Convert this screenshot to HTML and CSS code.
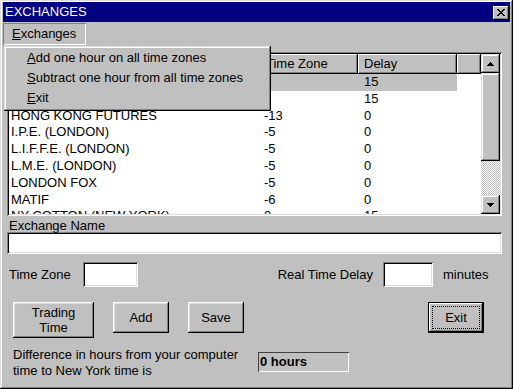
FILE: index.html
```html
<!DOCTYPE html>
<html lang="en">
<head>
    <meta charset="UTF-8">
    <title>EXCHANGES</title>
    <link rel="stylesheet" href="styles.css">
</head>
<body>
<div class="window">
    <div class="titlebar">
        <span class="title">EXCHANGES</span>
        <button class="close" type="button">
            <svg width="8" height="7" viewBox="0 0 8 7"><path d="M0 0h2v1h-2z M1 1h2v1h-2z M2 2h4v1h-4z M3 3h2v1h-2z M2 4h4v1h-4z M1 5h2v1h-2z M0 6h2v1h-2z M6 0h2v1h-2z M5 1h2v1h-2z M5 5h2v1h-2z M6 6h2v1h-2z" fill="#000"/></svg>
        </button>
    </div>
    <div class="menubar">
        <span class="menu-open"><u>E</u>xchanges</span>
    </div>

    <div class="content">
        <div class="list">
            <div class="list-main">
                <div class="list-head">
                    <div class="col name">Exchange</div>
                    <div class="col tz">Time Zone</div>
                    <div class="col delay">Delay</div>
                    <div class="col filler"></div>
                </div>
                <div class="row selected"><div class="col name">COMEX (NEW YORK)</div><div class="col tz">0</div><div class="col delay">15</div></div>
                <div class="row"><div class="col name">CSCE (NEW YORK)</div><div class="col tz">0</div><div class="col delay">15</div></div>
                <div class="row"><div class="col name">HONG KONG FUTURES</div><div class="col tz">-13</div><div class="col delay">0</div></div>
                <div class="row"><div class="col name">I.P.E. (LONDON)</div><div class="col tz">-5</div><div class="col delay">0</div></div>
                <div class="row"><div class="col name">L.I.F.F.E. (LONDON)</div><div class="col tz">-5</div><div class="col delay">0</div></div>
                <div class="row"><div class="col name">L.M.E. (LONDON)</div><div class="col tz">-5</div><div class="col delay">0</div></div>
                <div class="row"><div class="col name">LONDON FOX</div><div class="col tz">-5</div><div class="col delay">0</div></div>
                <div class="row"><div class="col name">MATIF</div><div class="col tz">-6</div><div class="col delay">0</div></div>
                <div class="row"><div class="col name">NY COTTON (NEW YORK)</div><div class="col tz">0</div><div class="col delay">15</div></div>
            </div>
            <div class="scrollbar">
                <div class="sb-btn">
                    <svg width="7" height="4" viewBox="0 0 7 4"><path d="M3 0h1v1h-1z M2 1h3v1h-3z M1 2h5v1h-5z M0 3h7v1h-7z" fill="#000"/></svg>
                </div>
                <div class="sb-thumb"></div>
                <div class="sb-track"></div>
                <div class="sb-btn">
                    <svg width="7" height="4" viewBox="0 0 7 4"><path d="M0 0h7v1h-7z M1 1h5v1h-5z M2 2h3v1h-3z M3 3h1v1h-1z" fill="#000"/></svg>
                </div>
            </div>
        </div>

        <div class="field-label">Exchange Name</div>
        <input class="name-input" type="text">

        <div class="tz-row">
            <span class="tz-label">Time Zone</span>
            <input class="tz-input" type="text">
            <div class="delay-group">
                <span class="delay-label">Real Time Delay</span>
                <input class="delay-input" type="text">
                <span class="minutes">minutes</span>
            </div>
        </div>

        <div class="buttons">
            <button class="btn btn-trading" type="button">Trading<br>Time</button>
            <button class="btn" type="button">Add</button>
            <button class="btn" type="button">Save</button>
            <button class="btn btn-exit" type="button">Exit</button>
        </div>

        <div class="diff-row">
            <div class="diff-text">Difference in hours from your computer time to New York time is</div>
            <div class="hours">0 hours</div>
        </div>
    </div>

    <div class="dropdown">
        <div class="dropdown-item"><u>A</u>dd one hour on all time zones</div>
        <div class="dropdown-item"><u>S</u>ubtract one hour from all time zones</div>
        <div class="dropdown-item"><u>E</u>xit</div>
    </div>
</div>
</body>
</html>
```

FILE: styles.css
```css
* {
    box-sizing: border-box;
}

html, body {
    margin: 0;
    padding: 0;
    background: #c0c0c0;
}

body {
    font-family: "Liberation Sans", Arial, sans-serif;
    font-size: 13px;
    color: #000;
}

.window {
    position: relative;
    width: 513px;
    height: 389px;
    padding: 2px 3px 3px 3px;
    background: #c0c0c0;
    box-shadow: inset -1px -1px #000, inset 1px 1px #dfdfdf, inset -2px -2px #808080, inset 2px 2px #fff;
}

.titlebar {
    height: 20px;
    background: #000080;
    color: #fff;
    display: flex;
    align-items: center;
    justify-content: space-between;
    padding: 0 1px 0 2px;
}

.title {
    line-height: 20px;
}

.close {
    width: 16px;
    height: 14px;
    padding: 0;
    border: 0;
    margin-top: 1px;
    background: #c0c0c0;
    display: flex;
    align-items: center;
    justify-content: center;
    box-shadow: inset -1px -1px #000, inset 1px 1px #fff, inset -2px -2px #808080;
}

.menubar {
    height: 24px;
    padding-top: 1px;
}

.menu-open {
    display: inline-block;
    width: 83px;
    height: 22px;
    line-height: 22px;
    padding-left: 9px;
    box-shadow: inset 1px 1px #808080, inset -1px -1px #fff;
}

.content {
    padding: 6px 8px 0 4px;
}

/* list */

.list {
    display: flex;
    width: 495px;
    height: 164px;
    padding: 2px;
    background: #fff;
    box-shadow: inset 1px 1px #808080, inset -1px -1px #fff, inset 2px 2px #000, inset -2px -2px #dfdfdf;
}

.list-main {
    flex: 1;
    overflow: hidden;
    background: #fff;
}

.list-head {
    display: flex;
    height: 20px;
}

.col {
    white-space: nowrap;
    overflow: hidden;
}

.col.name {
    width: 254px;
}

.col.tz {
    width: 95px;
}

.col.delay {
    width: 99px;
}

.col.filler {
    flex: 1;
}

.list-head .col {
    background: #c0c0c0;
    line-height: 20px;
    padding-left: 3px;
    box-shadow: inset -1px -1px #000, inset 1px 1px #fff, inset -2px -2px #808080;
}

.list-head .col.delay {
    padding-left: 6px;
}

.row {
    display: flex;
    height: 16.8px;
    line-height: 16.8px;
}

.row .col {
    padding-left: 2px;
}

.row .col.tz {
    padding-left: 1px;
}

.row .col.delay {
    padding-left: 6px;
}

.row.selected .col {
    background: #c0c0c0;
}

.scrollbar {
    width: 19px;
    display: flex;
    flex-direction: column;
}

.sb-btn {
    height: 19px;
    background: #c0c0c0;
    display: flex;
    align-items: center;
    justify-content: center;
    box-shadow: inset -1px -1px #000, inset 1px 1px #dfdfdf, inset -2px -2px #808080, inset 2px 2px #fff;
}

.sb-thumb {
    height: 88px;
    background: #c0c0c0;
    box-shadow: inset -1px -1px #000, inset 1px 1px #dfdfdf, inset -2px -2px #808080, inset 2px 2px #fff;
}

.sb-track {
    flex: 1;
    background: repeating-conic-gradient(#fff 0 25%, #c0c0c0 0 50%) 0 0 / 2px 2px;
}

/* form */

input {
    display: block;
    border: 0;
    padding: 0 3px;
    margin: 0;
    font: inherit;
    background: #fff;
    box-shadow: inset 1px 1px #808080, inset -1px -1px #fff, inset 2px 2px #000, inset -2px -2px #dfdfdf;
}

.field-label {
    padding: 3px 0 0 2px;
    line-height: 13px;
}

.name-input {
    width: 495px;
    height: 22px;
}

.tz-row {
    display: flex;
    align-items: center;
    height: 25px;
    margin-top: 8px;
}

.tz-label {
    width: 76px;
    padding-left: 2px;
}

.tz-input {
    width: 55px;
    height: 25px;
}

.delay-group {
    margin-left: auto;
    display: flex;
    align-items: center;
}

.delay-label {
    margin-right: 10px;
}

.delay-input {
    width: 50px;
    height: 25px;
}

.minutes {
    width: 69px;
    padding-left: 10px;
}

.buttons {
    display: flex;
    align-items: flex-start;
    gap: 19px;
    margin-top: 15px;
    padding-left: 6px;
}

.btn {
    position: relative;
    width: 56px;
    height: 31px;
    padding: 0;
    border: 0;
    font: inherit;
    line-height: 15px;
    color: #000;
    background: #c0c0c0;
    box-shadow: inset -1px -1px #000, inset 1px 1px #fff, inset -2px -2px #808080, inset 2px 2px #dfdfdf;
}

.btn-trading {
    width: 81px;
    height: 36px;
}

.btn-exit {
    margin-left: auto;
    margin-right: 18px;
    box-shadow: inset 0 0 0 1px #000, inset -2px -2px #000, inset 2px 2px #fff, inset -3px -3px #808080;
}

.btn-exit::after {
    content: "";
    position: absolute;
    left: 4px;
    top: 4px;
    right: 4px;
    bottom: 4px;
    border: 1px dotted #000;
}

.diff-row {
    display: flex;
    align-items: flex-start;
    margin-top: 9px;
    padding-left: 6px;
}

.diff-text {
    width: 245px;
    line-height: 16px;
}

.hours {
    width: 91px;
    height: 20px;
    margin-top: 5px;
    padding-left: 2px;
    line-height: 20px;
    font-weight: bold;
    box-shadow: inset 1px 1px #404040, inset -1px -1px #fff;
}

/* open menu */

.dropdown {
    position: absolute;
    left: 4px;
    top: 46px;
    width: 267px;
    height: 65px;
    padding: 2px 3px;
    background: #c0c0c0;
    box-shadow: inset -1px -1px #000, inset 1px 1px #dfdfdf, inset -2px -2px #808080, inset 2px 2px #fff;
}

.dropdown-item {
    height: 20px;
    line-height: 20px;
    padding-left: 20px;
    white-space: nowrap;
}
```
